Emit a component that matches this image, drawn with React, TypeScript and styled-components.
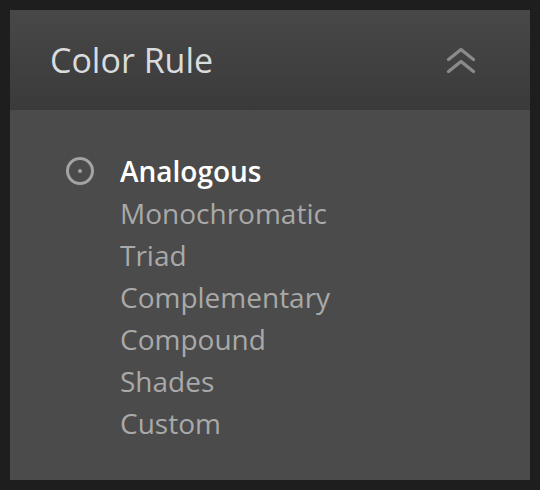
import React from "react";
import styled, { createGlobalStyle } from "styled-components";

const Global = createGlobalStyle`
  html, body { margin: 0; padding: 0; background: #1e1e1e; }
  body { font-family: "Open Sans", Lato, sans-serif; }
`;

const Page = styled.div`
  padding: 10px;
  height: 490px;
  box-sizing: border-box;
`;

const Panel = styled.section`
  height: 470px;
  background: #4b4b4b;
  display: flex;
  flex-direction: column;
`;

const Header = styled.header`
  height: 100px;
  box-sizing: border-box;
  background: linear-gradient(#484848, #3a3a3a);
  display: flex;
  align-items: center;
  justify-content: space-between;
  padding: 0 54px 0 40px;
`;

const Title = styled.h2`
  margin: 0;
  font-size: 34px;
  font-weight: 400;
  color: #d9dbdd;
`;

const CollapseButton = styled.button`
  background: none;
  border: 0;
  padding: 0;
  display: flex;
  cursor: pointer;
`;

const List = styled.ul`
  list-style: none;
  margin: 0;
  padding: 40px 0 0 0;
`;

const Item = styled.li<{ $active?: boolean }>`
  display: flex;
  align-items: center;
  height: 42px;
  font-size: 28px;
  color: ${(p) => (p.$active ? "#ffffff" : "#a9a9a9")};
  font-weight: ${(p) => (p.$active ? 600 : 400)};
`;

const Marker = styled.span`
  width: 110px;
  display: flex;
  justify-content: center;
  padding-left: 30px;
  box-sizing: border-box;
`;

const rules = [
  "Analogous",
  "Monochromatic",
  "Triad",
  "Complementary",
  "Compound",
  "Shades",
  "Custom",
];

export default function App() {
  return (
    <>
      <Global />
      <Page>
        <Panel>
          <Header>
            <Title>Color Rule</Title>
            <CollapseButton aria-label="Collapse">
              <svg width="30" height="27" viewBox="0 0 30 27" fill="none" stroke="#8a8a8a" strokeWidth="3.4" strokeLinecap="round" strokeLinejoin="round">
                <polyline points="2.5,12.5 15,2.5 27.5,12.5" />
                <polyline points="2.5,24.5 15,14.5 27.5,24.5" />
              </svg>
            </CollapseButton>
          </Header>
          <List>
            {rules.map((r, i) => (
              <Item key={r} $active={i === 0}>
                <Marker>
                  {i === 0 && (
                    <svg width="30" height="30" viewBox="0 0 30 30">
                      <circle cx="15" cy="15" r="12.5" fill="none" stroke="#a3a3a3" strokeWidth="3" />
                      <circle cx="15" cy="15" r="2" fill="#a3a3a3" />
                    </svg>
                  )}
                </Marker>
                {r}
              </Item>
            ))}
          </List>
        </Panel>
      </Page>
    </>
  );
}
